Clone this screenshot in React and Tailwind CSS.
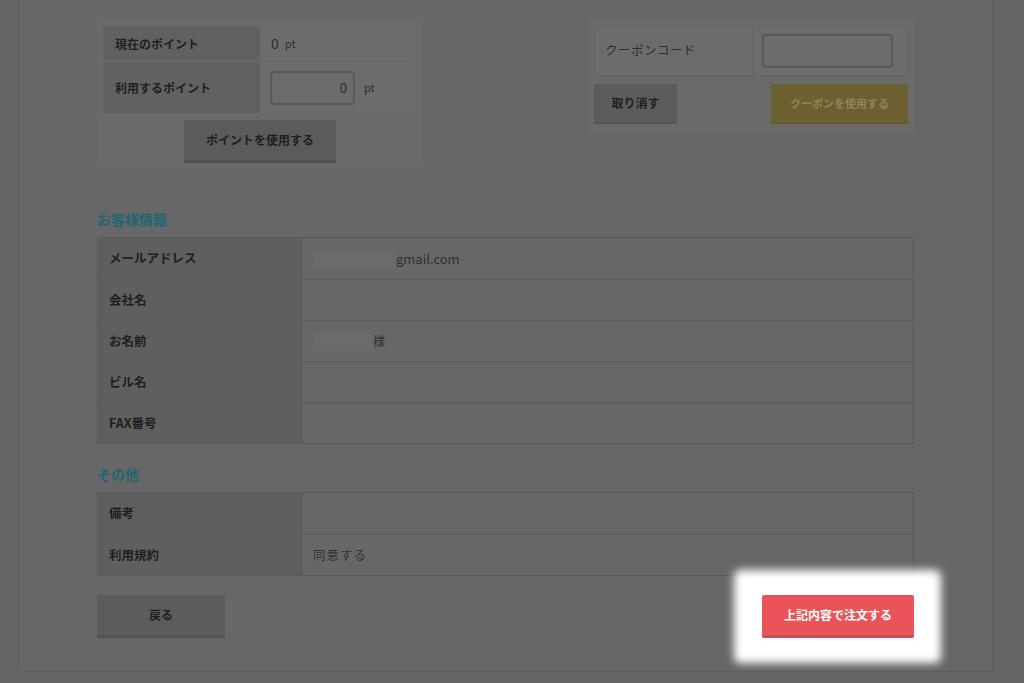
const customerRows = [
  { label: "メールアドレス", value: "email" },
  { label: "会社名", value: "" },
  { label: "お名前", value: "name" },
  { label: "ビル名", value: "" },
  { label: "FAX番号", value: "" },
];

const otherRows = [
  { label: "備考", value: "" },
  { label: "利用規約", value: "同意する" },
];

function Redacted({ className }) {
  return <span className={`inline-block bg-[#6b6b6b] blur-[0.8px] ${className}`} />;
}

function InfoTable({ rows }) {
  return (
    <div className="border border-[#595959]">
      {rows.map((row, i) => (
        <div
          key={row.label}
          className={`flex h-[41px] ${i > 0 ? "border-t border-[#5a5a5a]" : ""}`}
        >
          <div className="w-[204px] shrink-0 bg-[#5f5f5f] border-r border-[#5a5a5a] flex items-center pl-[11px] text-[12.5px] font-bold text-[#1e1e1e]">
            {row.label}
          </div>
          <div className="flex-1 flex items-center pl-[11px] text-[12.5px] text-[#262626]">
            {row.value === "email" && (
              <>
                <Redacted className="w-[83px] h-[18px] mt-[2px]" />
                <span className="text-[#303030] text-[13px]">gmail.com</span>
              </>
            )}
            {row.value === "name" && (
              <>
                <Redacted className="w-[60px] h-[19px]" />
                <span className="text-[#303030] text-[12px]">様</span>
              </>
            )}
            {row.value !== "email" && row.value !== "name" && (
              <span className="text-[#333333] tracking-[1px]">{row.value}</span>
            )}
          </div>
        </div>
      ))}
    </div>
  );
}

export default function App() {
  return (
    <div className="min-h-[683px] h-[683px] overflow-hidden bg-[#646464] font-['Noto_Sans_CJK_JP','Noto_Sans',sans-serif]">
      <div className="ml-[18px] w-[975px] border-x border-b border-[#5d5d5d] bg-[#676767] px-[78px] pt-[19px] pb-[33px]">
        {/* points / coupon */}
        <div className="flex justify-between items-start">
          <div className="w-[326px] bg-[#6a6a6a] pt-[8px] pl-[6px] pr-[8px] pb-[4px]">
            <div className="flex h-[33px]">
              <div className="w-[157px] bg-[#616161] flex items-center pl-[12px] text-[12px] font-bold text-[#1e1e1e]">
                現在のポイント
              </div>
              <div className="flex-1 bg-[#6c6c6c] flex items-center pl-[11px] text-[#2c2c2c]">
                <span className="text-[14px]">0</span>
                <span className="text-[11px] ml-[6px]">pt</span>
              </div>
            </div>
            <div className="flex h-[51px] mt-[2px]">
              <div className="w-[157px] bg-[#616161] flex items-center pl-[12px] text-[12px] font-bold text-[#1e1e1e]">
                利用するポイント
              </div>
              <div className="flex-1 bg-[#6c6c6c] flex items-center pl-[10px] text-[#2c2c2c]">
                <div className="w-[85px] h-[34px] rounded-[4px] border-2 border-[#585858] bg-[#6b6b6b] flex items-center justify-end pr-[6px] text-[13px]">
                  0
                </div>
                <span className="text-[11px] ml-[9px]">pt</span>
              </div>
            </div>
            <div className="flex justify-center pl-[2px] mt-[7px]">
              <button className="w-[152px] h-[43px] bg-[#5b5b5b] border-b-[3px] border-[#525252] text-[12px] font-bold text-[#1e1e1e]">
                ポイントを使用する
              </button>
            </div>
          </div>

          <div className="w-[326px] bg-[#6a6a6a] p-[6px] pb-[9px]">
            <div className="flex h-[51px] border border-[#656565]">
              <div className="w-[158px] bg-[#6c6c6c] border-r border-[#646464] flex items-center pl-[10px] text-[12.5px] text-[#2e2e2e] tracking-[0.5px]">
                クーポンコード
              </div>
              <div className="flex-1 bg-[#6c6c6c] flex items-center pl-[9px]">
                <div className="w-[131px] h-[34px] rounded-[4px] border-2 border-[#585858] bg-[#6c6c6c]" />
              </div>
            </div>
            <div className="flex justify-between mt-[8px]">
              <button className="w-[83px] h-[40px] bg-[#5c5c5c] border-b-[2px] border-[#545454] text-[12px] font-bold text-[#1e1e1e]">
                取り消す
              </button>
              <button className="w-[137px] h-[40px] bg-[#6c6031] border-b-[2px] border-[#645a2e] text-[11px] font-bold text-[#8f8660]">
                クーポンを使用する
              </button>
            </div>
          </div>
        </div>

        {/* customer info */}
        <h2 className="mt-[42px] text-[14px] font-bold text-[#1f6673] leading-[20px]">お客様情報</h2>
        <div className="mt-[8px]">
          <InfoTable rows={customerRows} />
        </div>

        <h2 className="mt-[20px] text-[14px] font-bold text-[#1f6673] leading-[20px]">その他</h2>
        <div className="mt-[8px]">
          <InfoTable rows={otherRows} />
        </div>

        {/* actions */}
        <div className="flex justify-between items-start mt-[19px]">
          <button className="w-[128px] h-[43px] bg-[#5c5c5c] border-b-[3px] border-[#525252] text-[12px] font-bold text-[#1e1e1e]">
            戻る
          </button>
          <div className="relative">
            <span className="absolute -left-[28px] -right-[27px] -top-[25px] -bottom-[25px] bg-white rounded-[6px] blur-[4px]" />
            <button className="relative w-[152px] h-[43px] rounded-[2px] bg-[#ea5458] border-b-[3px] border-[#cf4a4e] text-[12px] font-bold text-white">
              上記内容で注文する
            </button>
          </div>
        </div>
      </div>
    </div>
  );
}
